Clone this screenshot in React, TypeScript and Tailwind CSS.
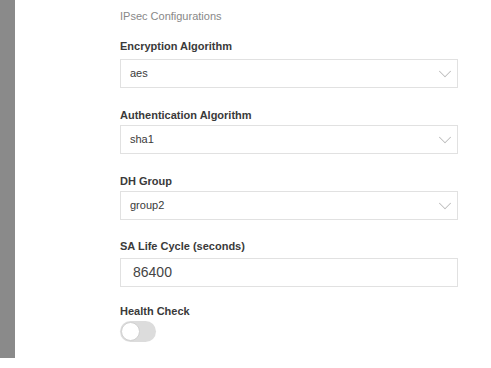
import { ChevronDown } from "lucide-react";

type SelectProps = { value: string };

function SelectBox({ value }: SelectProps) {
  return (
    <div className="flex h-[29px] w-[338px] items-center justify-between border border-[#e1e1e1] bg-white pl-[9px] pr-[1px]">
      <span className="text-[11px] text-[#3a3a3a]">{value}</span>
      <ChevronDown className="h-[22px] w-[22px] text-[#bcbcbc]" strokeWidth={1.1} />
    </div>
  );
}

function Label({ children }: { children: string }) {
  return <div className="text-[11px] font-bold leading-[14px] text-[#3a3a3a]">{children}</div>;
}

export default function App() {
  return (
    <div className="flex h-[368px] w-[491px] bg-white font-['Liberation_Sans',Arial,sans-serif]">
      <div className="h-[358px] w-[15px] bg-[#8a8a8a]" />
      <div className="ml-[105px] flex flex-col pt-[9px]">
        <div className="text-[11px] leading-[14px] text-[#888]">IPsec Configurations</div>

        <div className="mt-[16px]">
          <Label>Encryption Algorithm</Label>
        </div>
        <div className="mt-[6px]">
          <SelectBox value="aes" />
        </div>

        <div className="mt-[20px]">
          <Label>Authentication Algorithm</Label>
        </div>
        <div className="mt-[3px]">
          <SelectBox value="sha1" />
        </div>

        <div className="mt-[20px]">
          <Label>DH Group</Label>
        </div>
        <div className="mt-[3px]">
          <SelectBox value="group2" />
        </div>

        <div className="mt-[19px]">
          <Label>SA Life Cycle (seconds)</Label>
        </div>
        <div className="mt-[5px] flex h-[29px] w-[338px] items-center border border-[#e1e1e1] bg-white pl-[12px]">
          <span className="text-[14px] text-[#444]">86400</span>
        </div>

        <div className="mt-[17px]">
          <Label>Health Check</Label>
        </div>
        <div className="mt-[3px] flex h-[21px] w-[36px] items-center rounded-full bg-[#dcdcdc] p-[1px]">
          <div className="h-[19px] w-[19px] rounded-full border border-[#d0d0d0] bg-white" />
        </div>
      </div>
    </div>
  );
}
